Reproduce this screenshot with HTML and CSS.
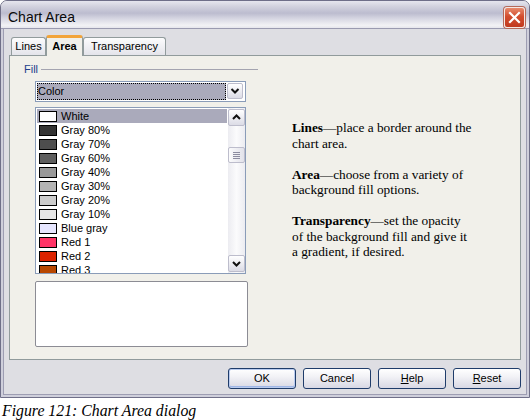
FILE: index.html
```html
<!DOCTYPE html>
<html>
<head>
<meta charset="utf-8">
<link rel="stylesheet" href="styles.css">
</head>
<body>
<div class="window">
  <div class="titlebar">
    <span class="title">Chart Area</span>
    <span class="close"><svg width="19" height="19" viewBox="0 0 19 19"><path d="M5 5 L14 14 M14 5 L5 14" stroke="#fff" stroke-width="2.2" stroke-linecap="square"/></svg></span>
  </div>
  <div class="body">
    <div class="tabs">
      <div class="tab t-lines">Lines</div>
      <div class="tab active t-area">Area</div>
      <div class="tab t-trans">Transparency</div>
    </div>
    <div class="panel">
      <div class="left">
        <div class="fill-head"><span class="fill-label">Fill</span><span class="rule"></span></div>
        <div class="controls">
          <div class="select">
            <div class="value">Color</div>
            <div class="sbtn"><svg width="14" height="14" viewBox="0 0 14 14"><path d="M3.5 5 L7 8.5 L10.5 5" fill="none" stroke="#111" stroke-width="2"/></svg></div>
          </div>
          <div class="listbox">
            <div class="rows">
              <div class="row sel"><span class="sw" style="background:#ffffff"></span>White</div>
              <div class="row"><span class="sw" style="background:#333333"></span>Gray 80%</div>
              <div class="row"><span class="sw" style="background:#4d4d4d"></span>Gray 70%</div>
              <div class="row"><span class="sw" style="background:#5e5e5e"></span>Gray 60%</div>
              <div class="row"><span class="sw" style="background:#999999"></span>Gray 40%</div>
              <div class="row"><span class="sw" style="background:#b3b3b3"></span>Gray 30%</div>
              <div class="row"><span class="sw" style="background:#cccccc"></span>Gray 20%</div>
              <div class="row"><span class="sw" style="background:#e6e6e6"></span>Gray 10%</div>
              <div class="row"><span class="sw" style="background:#e6e6ff"></span>Blue gray</div>
              <div class="row"><span class="sw" style="background:#ff3366"></span>Red 1</div>
              <div class="row"><span class="sw" style="background:#dc2300"></span>Red 2</div>
              <div class="row"><span class="sw" style="background:#b84700"></span>Red 3</div>
            </div>
            <div class="scrollbar">
              <div class="sbtn up"><svg width="15" height="15" viewBox="0 0 15 15"><path d="M4 9 L7.5 5.5 L11 9" fill="none" stroke="#111" stroke-width="2"/></svg></div>
              <div class="track">
                <div class="thumb"><span></span><span></span><span></span><span></span></div>
              </div>
              <div class="sbtn down"><svg width="15" height="15" viewBox="0 0 15 15"><path d="M4 6 L7.5 9.5 L11 6" fill="none" stroke="#111" stroke-width="2"/></svg></div>
            </div>
          </div>
          <div class="preview"></div>
        </div>
      </div>
      <div class="help">
        <p><b>Lines</b>—place a border around the<br>chart area.</p>
        <p><b>Area</b>—choose from a variety of<br>background fill options.</p>
        <p><b>Transparency</b>—set the opacity<br>of the background fill and give it<br>a gradient, if desired.</p>
      </div>
    </div>
    <div class="buttons">
      <div class="btn default">OK</div>
      <div class="btn">Cancel</div>
      <div class="btn"><u>H</u>elp</div>
      <div class="btn"><u>R</u>eset</div>
    </div>
  </div>
</div>
<div class="caption">Figure 121: Chart Area dialog</div>
</body>
</html>
```
FILE: styles.css
```css
* { box-sizing: border-box; }
html, body { margin: 0; padding: 0; background: #ffffff; }
body { width: 530px; height: 420px; overflow: hidden; font-family: "Liberation Sans", Arial, sans-serif; font-size: 11px; color: #000; }

.window {
  width: 530px;
  height: 398px;
  border: 1px solid #6f6f88;
  border-radius: 7px 7px 0 0;
  background: #dedee3;
  display: flex;
  flex-direction: column;
  overflow: hidden;
}

.titlebar {
  flex: none;
  height: 28px;
  display: flex;
  justify-content: space-between;
  align-items: flex-start;
  padding: 0 4px 0 7px;
  background: linear-gradient(#e6e6ee 0%, #d2d2de 20%, #bcbccf 45%, #d6d6e2 65%, #f2f2f5 90%, #e6e6ec 100%);
  border-bottom: 1px solid #9a9ab0;
}
.title { margin-top: 8px; font-size: 14px; line-height: 16px; color: #0a0a0a; }
.close {
  margin-top: 6px;
  width: 21px;
  height: 21px;
  border: 1px solid #f4e8e4;
  border-radius: 3px;
  background: linear-gradient(#e88a6c, #d24d2e 45%, #c13a1f);
  box-shadow: 0 0 0 1px #b56a5a;
  display: flex;
  align-items: center;
  justify-content: center;
}

.body {
  flex: 1;
  display: flex;
  flex-direction: column;
  padding: 6px 6px 0 6px;
  border-left: 2px solid #cfcfdb;
  border-right: 2px solid #cfcfdb;
  border-bottom: 2px solid #cfcfdb;
  box-shadow: inset 1px 0 #9d9db2, inset -1px 0 #9d9db2, inset 0 -1px #9d9db2;
}

.tabs {
  flex: none;
  height: 20px;
  display: flex;
  align-items: flex-end;
  margin-left: 2px;
}
.tab {
  height: 18px;
  border: 1px solid #919b9c;
  border-bottom: none;
  border-radius: 3px 3px 0 0;
  background: linear-gradient(#fcfcfd, #e4e4ea);
  text-align: center;
  line-height: 17px;
  font-size: 11px;
}
.t-lines { width: 35px; }
.t-area { width: 37px; }
.t-trans { width: 83px; }
.tab.active {
  height: 21px;
  margin-bottom: -1px;
  position: relative;
  z-index: 1;
  background: #f1f0ea;
  border-top: 3px solid #f2a43a;
  font-weight: bold;
  line-height: 16px;
}

.panel {
  flex: none;
  height: 305px;
  border: 1px solid #919b9c;
  background: #f1f0ea;
  display: flex;
}

.left { width: 248px; padding-left: 14px; }
.fill-head {
  margin-top: 7px;
  height: 13px;
  display: flex;
  align-items: center;
  gap: 3px;
}
.fill-label { color: #22408c; line-height: 13px; }
.rule { flex: 1; border-top: 1px solid #a4a4b0; }

.controls { margin-left: 11px; }

.select {
  margin-top: 5px;
  width: 211px;
  height: 21px;
  border: 1px solid #8a9cb8;
  background: #fff;
  padding: 1px;
  display: flex;
  gap: 1px;
}
.select .value {
  flex: 1;
  background: #aaaabb;
  outline: 1px dotted #000;
  outline-offset: -1px;
  padding-left: 1px;
  line-height: 17px;
}
.sbtn {
  width: 16px;
  height: 16px;
  border: 1px solid #bdbdcc;
  border-radius: 2px;
  background: linear-gradient(#ffffff, #dcdce6);
  display: flex;
  align-items: center;
  justify-content: center;
}
.select .sbtn { width: 16px; height: 16px; margin-right: 1px; }

.listbox {
  margin-top: 5px;
  width: 211px;
  height: 167px;
  border: 1px solid #8a9cb8;
  background: #fff;
  display: flex;
}
.rows { flex: 1; padding: 1px; overflow: hidden; }
.row {
  height: 14px;
  display: flex;
  align-items: center;
  padding-left: 2px;
  gap: 4px;
  line-height: 14px;
  white-space: nowrap;
}
.row.sel { background: #aaaabb; }
.sw { width: 18px; height: 11px; border: 1px solid #000; flex: none; }

.scrollbar {
  width: 17px;
  display: flex;
  flex-direction: column;
  padding: 1px 0;
  background: linear-gradient(to right, #ececf1, #fbfbfc 50%, #ececf1);
}
.scrollbar .sbtn { width: 17px; height: 17px; }
.track { flex: 1; padding-top: 21px; }
.thumb {
  width: 17px;
  height: 16px;
  border: 1px solid #bdbdcc;
  border-radius: 2px;
  background: linear-gradient(to right, #fbfbfc, #e2e2ea);
  display: flex;
  flex-direction: column;
  align-items: center;
  justify-content: center;
  gap: 1px;
}
.thumb span { width: 7px; height: 1px; background: #8d8da0; }

.preview {
  margin-top: 7px;
  width: 213px;
  height: 66px;
  border: 1px solid #8c8c94;
  border-radius: 2px;
  background: #fff;
}

.help {
  margin-left: 34px;
  margin-top: 64px;
  font-family: "Liberation Serif", "Times New Roman", serif;
  font-size: 13.3px;
  line-height: 15.5px;
  color: #000;
}
.help p { margin: 0 0 15.5px 0; }

.buttons {
  flex: none;
  margin-top: 8px;
  display: flex;
  justify-content: flex-end;
  gap: 7px;
}
.btn {
  width: 68px;
  height: 21px;
  border: 1px solid #1f3c6a;
  border-radius: 3px;
  background: linear-gradient(#ffffff, #f2f2f6 40%, #d8d8e4);
  text-align: center;
  line-height: 19px;
  font-size: 11px;
}
.btn.default { box-shadow: inset 0 0 0 1px #b9cbef, inset 0 -1px 0 1px #9fb6e6; }

.caption {
  margin-top: 4px;
  padding-left: 2px;
  font-family: "Liberation Serif", "Times New Roman", serif;
  font-style: italic;
  font-size: 15.8px;
  line-height: 18px;
}
```
